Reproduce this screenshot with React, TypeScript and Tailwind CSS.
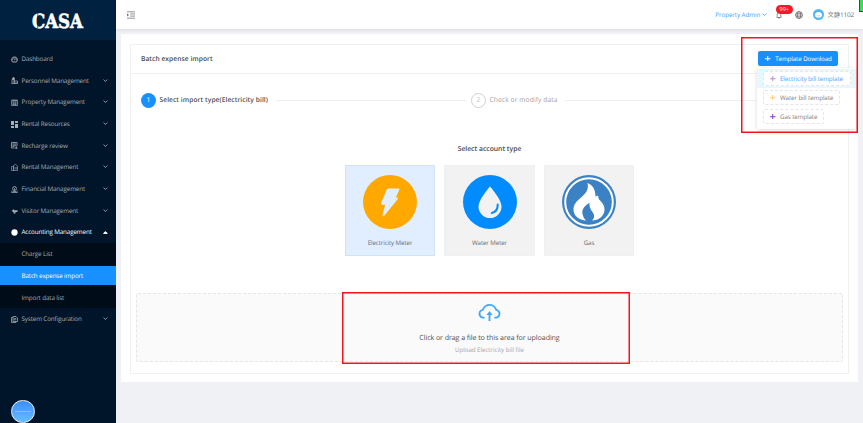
import React from "react";
import type { ReactNode } from "react";
import { AiOutlineBell, AiOutlineCloudUpload, AiOutlineDashboard } from "react-icons/ai";

function Chevron({ up = false, className = "" }: { up?: boolean; className?: string }) {
  return (
    <svg viewBox="0 0 10 6" className={`h-[3px] w-[4.800px] ${className}`} fill="none" stroke="currentColor" strokeWidth="1.800">
      {up ? <path d="M1 5 L5 1 L9 5 Z" fill="currentColor" /> : <path d="M1 1 L5 5 L9 1" />}
    </svg>
  );
}

const glyph = "h-[7px] w-[7px] mt-px";

const icons: Record<string, ReactNode> = {
  dashboard: <AiOutlineDashboard className={glyph} strokeWidth="50" stroke="currentColor" />,
  person: (
    <svg viewBox="0 0 14 14" className={glyph} fill="none" stroke="currentColor" strokeWidth="1.5">
      <path d="M2 13V5h5v8M1 13h12M8 8h5v5M10 10v3M4 8h2M4 10h2" />
      <circle cx="5" cy="3" r="2" fill="currentColor" />
    </svg>
  ),
  property: (
    <svg viewBox="0 0 14 14" className={glyph} fill="none" stroke="currentColor" strokeWidth="1.300">
      <path d="M1 3h12v10H1zM1 2h12M4 6h6M4 8.500h6M4 11h6M4 3v10M10 3v10" />
    </svg>
  ),
  rental: (
    <svg viewBox="0 0 14 14" className={glyph} fill="currentColor">
      <path d="M0 0h6v8H0zM8 0h6v4H8zM0 10h6v4H0zM8 6h6v8H8z" />
    </svg>
  ),
  review: (
    <svg viewBox="0 0 14 14" className={glyph} fill="none" stroke="currentColor" strokeWidth="1.600">
      <path d="M7 12H1V1h11v7M3 4h7M3 6.500h7M3 9h4M8 12h5M10.500 8v6" />
    </svg>
  ),
  rentmgmt: (
    <svg viewBox="0 0 14 14" className={glyph} fill="none" stroke="currentColor" strokeWidth="1.200">
      <path d="M1 13V5h4v8M5 13V3l4-2 4 3v9M1 13h12M8 6v5M10.500 6v5" />
    </svg>
  ),
  finance: (
    <svg viewBox="0 0 14 14" className={glyph} fill="none" stroke="currentColor" strokeWidth="1.500">
      <circle cx="7" cy="5" r="4" />
      <path d="M5 3l2 2 2-2M7 5v4M1 13h12M2 9v4M12 9v4M4 11h6" />
    </svg>
  ),
  visitor: (
    <svg viewBox="0 0 14 14" className={glyph} fill="currentColor">
      <path d="M1 8l5-4v2.500h7v3.500H9V13H5V10z" />
    </svg>
  ),
  accounting: (
    <svg viewBox="0 0 14 14" className={glyph} fill="currentColor">
      <circle cx="7" cy="7" r="6.300" />
    </svg>
  ),
  system: (
    <svg viewBox="0 0 14 14" className={glyph} fill="none" stroke="currentColor" strokeWidth="1.500">
      <path d="M4 3H1v10h9v-2M4 1h6l3 3v7H4z" />
      <circle cx="8" cy="6.500" r="1.800" />
    </svg>
  ),
};

function MenuItem({ icon, label, chevron = true, open = false }: { icon: string; label: string; chevron?: boolean; open?: boolean }) {
  return (
    <div className={`flex h-[21.700px] shrink-0 items-center pl-[10.500px] pr-[8px] ${open ? "text-white" : "text-[#a6adb4]"}`}>
      {icons[icon]}
      <span className="ml-[4px] flex-1 whitespace-nowrap">{label}</span>
      {chevron && <Chevron up={open} />}
    </div>
  );
}

function Sidebar() {
  return (
    <aside className="flex w-[115.500px] shrink-0 flex-col bg-[#001529] text-[6.300px] tracking-[-0.140px]">
      <div className="flex h-10 shrink-0 items-center justify-center bg-[#002140]">
        <svg width="54" height="20" viewBox="0 0 54 20" className="overflow-visible">
          <text
            x="1"
            y="17.600"
            textLength="51"
            lengthAdjust="spacingAndGlyphs"
            strokeWidth="0.600"
            className="fill-white stroke-white font-['DejaVu_Serif','Liberation_Serif',serif] text-[19.500px] font-bold tracking-normal"
          >
            CASA
          </text>
          <path d="M6.800 1.500v17" stroke="#002140" strokeWidth="0.700" />
        </svg>
      </div>
      <nav className="flex flex-col pt-[7.700px]">
        <MenuItem icon="dashboard" label="Dashboard" chevron={false} />
        <MenuItem icon="person" label="Personnel Management" />
        <MenuItem icon="property" label="Property Management" />
        <MenuItem icon="rental" label="Rental Resources" />
        <MenuItem icon="review" label="Recharge review" />
        <MenuItem icon="rentmgmt" label="Rental Management" />
        <MenuItem icon="finance" label="Financial Management" />
        <MenuItem icon="visitor" label="Visitor Management" />
        <MenuItem icon="accounting" label="Accounting Management" open />
        <div className="flex h-[65.100px] flex-col justify-between bg-[#000c17] py-[1.500px] text-[#a6adb4]">
          <div className="flex h-[18.500px] items-center pl-[21.500px]">Charge List</div>
          <div className="flex h-[18.500px] items-center bg-[#1890ff] pl-[21.500px] text-white">Batch expense import</div>
          <div className="flex h-[18.500px] items-center pl-[21.500px]">Import data list</div>
        </div>
        <MenuItem icon="system" label="System Configuration" />
      </nav>
      <div className="mt-auto ml-[11px] flex h-[23.500px] w-[23.500px] items-center justify-center rounded-full border border-[#eef4fa] bg-linear-to-b from-[#3c8df8] to-[#66bdff]">
        <span className="h-px w-4 bg-white/30" />
      </div>
    </aside>
  );
}

function TopBar() {
  return (
    <header className="flex h-[28.500px] shrink-0 items-center bg-white pl-[11px] pr-[9px] shadow-[0_1px_3px_rgba(0,21,41,0.10)]">
      <svg viewBox="0 0 16 14" className="mt-px h-[8px] w-[8.500px]" fill="none" stroke="#777" strokeWidth="1.500">
        <path d="M0 1h16M6 5h10M6 9h10M0 13h16" />
        <path d="M0 4v6l4-3z" fill="#777" stroke="none" />
      </svg>
      <div className="ml-auto flex items-center text-[6.300px]">
        <span className="tracking-[-0.100px] text-[#3f9ffb]">Property Admin</span>
        <Chevron className="ml-[2px] text-[#3f9ffb]" />
        <div className="relative ml-[7.500px]">
          <AiOutlineBell className="mt-px h-[8px] w-[8px] text-[#444]" />
          <span className="absolute -top-[5px] left-[1.500px] flex h-[9px] w-[16.500px] items-center justify-center rounded-full bg-[#ee1c25] text-[5.500px] leading-none text-white">99+</span>
        </div>
        <svg viewBox="0 0 16 16" className="ml-[12px] mt-px h-[8px] w-[8px]" fill="none" stroke="#666" strokeWidth="1.400">
          <circle cx="8" cy="8" r="7" />
          <ellipse cx="8" cy="8" rx="3.300" ry="7" />
          <path d="M1 8h14M2 4.500h12M2 11.500h12" />
        </svg>
        <svg viewBox="0 0 22 22" className="ml-[10px] mt-px h-[11px] w-[11px]">
          <circle cx="11" cy="11" r="11" fill="#55b4f4" />
          <ellipse cx="11" cy="12" rx="7" ry="5.500" fill="#fff" />
          <path d="M6 9q5-4 10 0" stroke="#fff" strokeWidth="2" fill="none" />
          <path d="M8 13q3 2 6 0" stroke="#55b4f4" fill="none" />
        </svg>
        <span className="ml-[4px] mt-px font-['Open_Sans','Noto_Sans_CJK_SC',sans-serif] text-[6.400px] tracking-[-0.150px] text-[#707070]">文静1102</span>
      </div>
    </header>
  );
}

function ElectricityIcon() {
  return (
    <svg viewBox="0 0 54 54" className="h-[54px] w-[54px]">
      <circle cx="27" cy="27" r="27" fill="#ffa800" />
      <path d="M25.500 13.500H35.500Q37 13.500 36.300 15L32.800 22.500H34.300Q35.600 22.700 34.800 24L21.500 40.500Q19.500 42 19.500 39.500L22.200 29.800H19Q17.600 29.700 18 28.300L23.500 15Q24 13.600 25.500 13.500Z" fill="#e1eeff" />
    </svg>
  );
}

function WaterIcon() {
  return (
    <svg viewBox="0 0 54 54" className="h-[54px] w-[54px]">
      <circle cx="27" cy="27" r="27" fill="#008cff" />
      <path d="M27 11.500C30 15 38.500 25 38.500 31.500A11.500 11.500 0 0 1 15.500 31.500C15.500 25 24 15 27 11.500Z" fill="#f2f2f2" />
      <path d="M34.700 29.500Q35 36.500 28.800 38" fill="none" stroke="#008cff" strokeWidth="2" strokeLinecap="round" />
    </svg>
  );
}

function GasIcon() {
  return (
    <svg viewBox="0 0 54 54" className="h-[54px] w-[54px]">
      <circle cx="27" cy="27" r="27" fill="#3b82c4" />
      <circle cx="27" cy="27" r="23.800" fill="none" stroke="#fff" strokeWidth="2" />
      <path d="M25.500 8C31 10 33.500 15 33.500 21.500L36 20.500Q36.500 23 37 24.500C40 27 43 31 42.500 35C42 41 37 45.500 30 45.500C33 43 32.500 39.500 30.500 37C28.500 34.500 27 31 27.500 28C23 30 19.500 34.500 20.500 39Q21.300 43 24 45.500C17 45 11.500 41 11.500 34.500C11.500 29.500 14.500 26.500 18.500 23C24 18 27 15 25.500 8Z" fill="#fff" />
    </svg>
  );
}

function AccountCard({ label, selected = false, children }: { label: string; selected?: boolean; children: ReactNode }) {
  return (
    <div className={`flex h-[91px] w-[90.500px] flex-col items-center border pt-[8.500px] ${selected ? "border-[#cfe3fd] bg-[#e1eeff]" : "border-[#f0f0f0] bg-[#f2f2f2]"}`}>
      {children}
      <span className="mt-[9px] text-[6.200px] leading-[9px] tracking-[-0.100px] text-[#6b6b6b]">{label}</span>
    </div>
  );
}

function Plus({ className = "" }: { className?: string }) {
  return (
    <svg viewBox="0 0 10 10" className={`mr-[4.500px] h-[5.500px] w-[5.500px] ${className}`} stroke="currentColor" strokeWidth="1.800">
      <path d="M5 0v10M0 5h10" />
    </svg>
  );
}

function TemplateRow({ label, plus, active = false, width }: { label: string; plus: string; active?: boolean; width: string }) {
  return (
    <div className={`flex h-[19px] items-center pl-[6px] ${active ? "bg-[#e6f7ff]" : ""}`}>
      <div className={`flex h-[15px] ${width} items-center whitespace-nowrap rounded-[2px] border border-dashed border-[#e6e6e6] bg-white pl-[6.500px] pt-px ${active ? "text-[#3fa4ff]" : "text-[#808080]"}`}>
        <Plus className={plus} />
        {label}
      </div>
    </div>
  );
}

function DownloadMenu() {
  return (
    <div className="absolute left-[741px] top-[37px] h-[95.500px] w-[117px] pl-[15.500px] pt-[14px] text-[6.200px] tracking-[-0.090px] shadow-[inset_0_0_0_1.500px_#f5141c]">
      <div className="ml-[1.500px] flex h-[15px] w-[80px] items-center justify-center rounded-[2px] bg-[#1890ff] pl-px text-white">
        <Plus />
        Template Download
      </div>
      <div className="mt-[1.500px] flex h-[61px] w-[99px] flex-col rounded-[2px] bg-white pt-px shadow-[0_1px_4px_rgba(0,0,0,0.14)]">
        <TemplateRow label="Electricity bill template" plus="text-[#b58fb8]" width="w-[88px]" active />
        <TemplateRow label="Water bill template" plus="text-[#ffc773]" width="w-[77.500px]" />
        <TemplateRow label="Gas template" plus="text-[#8a35c0]" width="w-[61px]" />
      </div>
    </div>
  );
}

function Steps() {
  return (
    <div className="flex h-[15px] items-center text-[6.700px]">
      <span className="flex h-[15px] w-[15px] items-center justify-center rounded-full bg-[#1890ff] text-white">1</span>
      <span className="ml-[3.500px] w-[109px] whitespace-nowrap font-semibold tracking-[0.060px] text-[#505050]">Select import type(Electricity bill)</span>
      <span className="ml-[7px] h-px w-[191px] bg-[#efefef]" />
      <span className="ml-[4.500px] flex h-[15px] w-[15px] items-center justify-center rounded-full border border-[#cfcfcf] text-[#c0c0c0]">2</span>
      <span className="ml-[3.500px] w-[69px] whitespace-nowrap tracking-[0.090px] text-[#a0a0a0]">Check or modify data</span>
      <span className="ml-[6px] h-px flex-1 bg-[#efefef]" />
    </div>
  );
}

export default function App() {
  return (
    <div className="relative flex h-[423px] w-[863px] overflow-hidden bg-[#eff1f5] font-['Open_Sans','Noto_Sans',sans-serif] leading-normal [text-rendering:geometricPrecision]">
      <Sidebar />
      <div className="flex min-w-0 flex-1 flex-col">
        <TopBar />
        <main className="ml-[5.500px] mr-[5px] mt-[5.500px] h-[348px] bg-white px-[9px] pt-[9.500px]">
          <section className="flex h-[330px] flex-col border border-[#f0f0f0]">
            <h1 className="flex h-[29px] shrink-0 items-center border-b border-[#f0f0f0] pl-[10px] pt-px text-[6.700px] font-semibold tracking-[0.040px] text-[#484848]">Batch expense import</h1>
            <div className="pl-[10px] pt-[19px]">
              <Steps />
            </div>
            <h2 className="mt-[36.500px] text-center text-[6.800px] font-semibold leading-[10px] text-[#484848]">Select account type</h2>
            <div className="mt-[11px] flex justify-center gap-[9px]">
              <AccountCard label="Electricity Meter" selected>
                <ElectricityIcon />
              </AccountCard>
              <AccountCard label="Water Meter">
                <WaterIcon />
              </AccountCard>
              <AccountCard label="Gas">
                <GasIcon />
              </AccountCard>
            </div>
            <div className="mx-[5px] mt-[37px] flex h-[69px] flex-col items-center rounded-[2px] border border-dashed border-[#e6e6e6] bg-[#fafafa]">
              <AiOutlineCloudUpload className="mt-[5.500px] h-[25px] w-[25px] text-[#40a9ff]" />
              <span className="mt-[8px] text-[7.100px] leading-[11px] tracking-[-0.080px] text-[#505050]">Click or drag a file to this area for uploading</span>
              <span className="mt-[1.500px] text-[6.200px] leading-[10px] tracking-[-0.050px] text-[#a6a6a6]">Upload Electricity bill file</span>
            </div>
          </section>
        </main>
      </div>
      <div className="absolute left-[341.500px] top-[292px] h-[71.500px] w-[288.500px] shadow-[inset_0_0_0_1.500px_#f5141c]" />
      <DownloadMenu />
      <div className="absolute right-0 top-0 h-[11.500px] w-[4px] border-b border-l border-[#1f5a3a] bg-[#3ade5c]" />
    </div>
  );
}
